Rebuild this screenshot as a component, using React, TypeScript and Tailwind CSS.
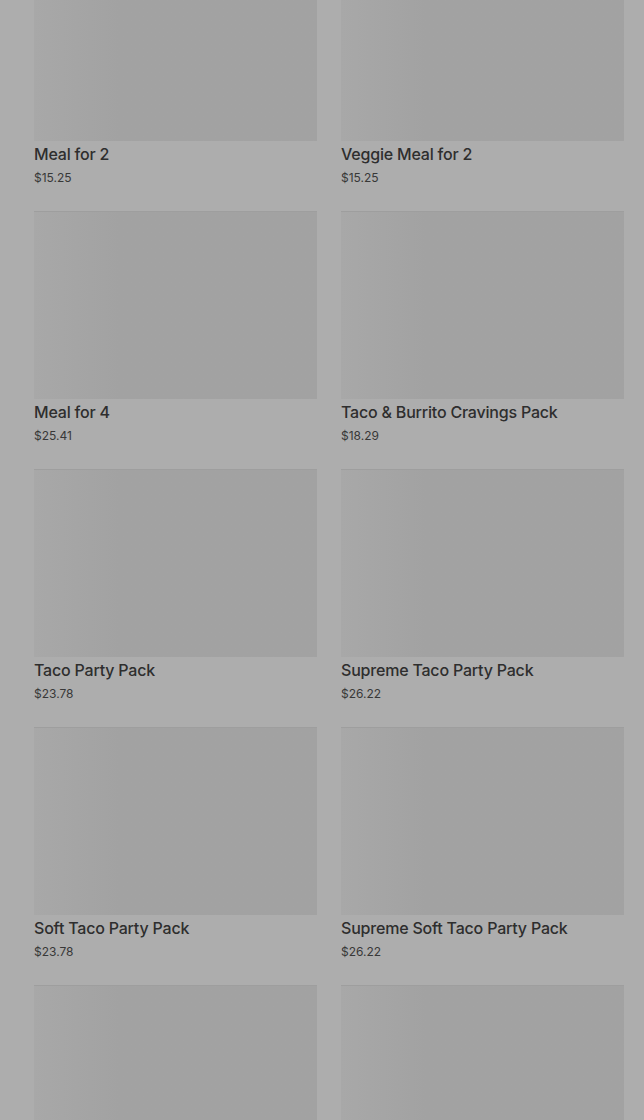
const items = [
  { name: "Meal for 2", price: "$15.25" },
  { name: "Veggie Meal for 2", price: "$15.25" },
  { name: "Meal for 4", price: "$25.41" },
  { name: "Taco & Burrito Cravings Pack", price: "$18.29" },
  { name: "Taco Party Pack", price: "$23.78" },
  { name: "Supreme Taco Party Pack", price: "$26.22" },
  { name: "Soft Taco Party Pack", price: "$23.78" },
  { name: "Supreme Soft Taco Party Pack", price: "$26.22" },
  { name: "", price: "" },
  { name: "", price: "" },
]

export default function App() {
  return (
    <div
      className="h-[1120px] overflow-hidden bg-[#adadad] pl-[34px] pr-[20px]"
      style={{ fontFamily: "Inter, 'Noto Sans', sans-serif" }}
    >
      <div className="-mt-[47px] grid grid-cols-2 gap-x-[24px] gap-y-[25px]">
        {items.map((item, i) => (
          <div key={i} className="flex flex-col">
            <div className="h-[188px] border-t border-[#9e9e9e] bg-gradient-to-r from-[#a8a8a8] via-[#a2a2a2] via-30% to-[#a2a2a2]"></div>
            <div className="mt-[3px] text-[16px] leading-[20px] font-medium text-[#2e2e2e] tracking-[-0.2px]">
              {item.name}
            </div>
            <div className="mt-[6px] text-[12px] leading-[16px] text-[#383838]">
              {item.price}
            </div>
          </div>
        ))}
      </div>
    </div>
  )
}
